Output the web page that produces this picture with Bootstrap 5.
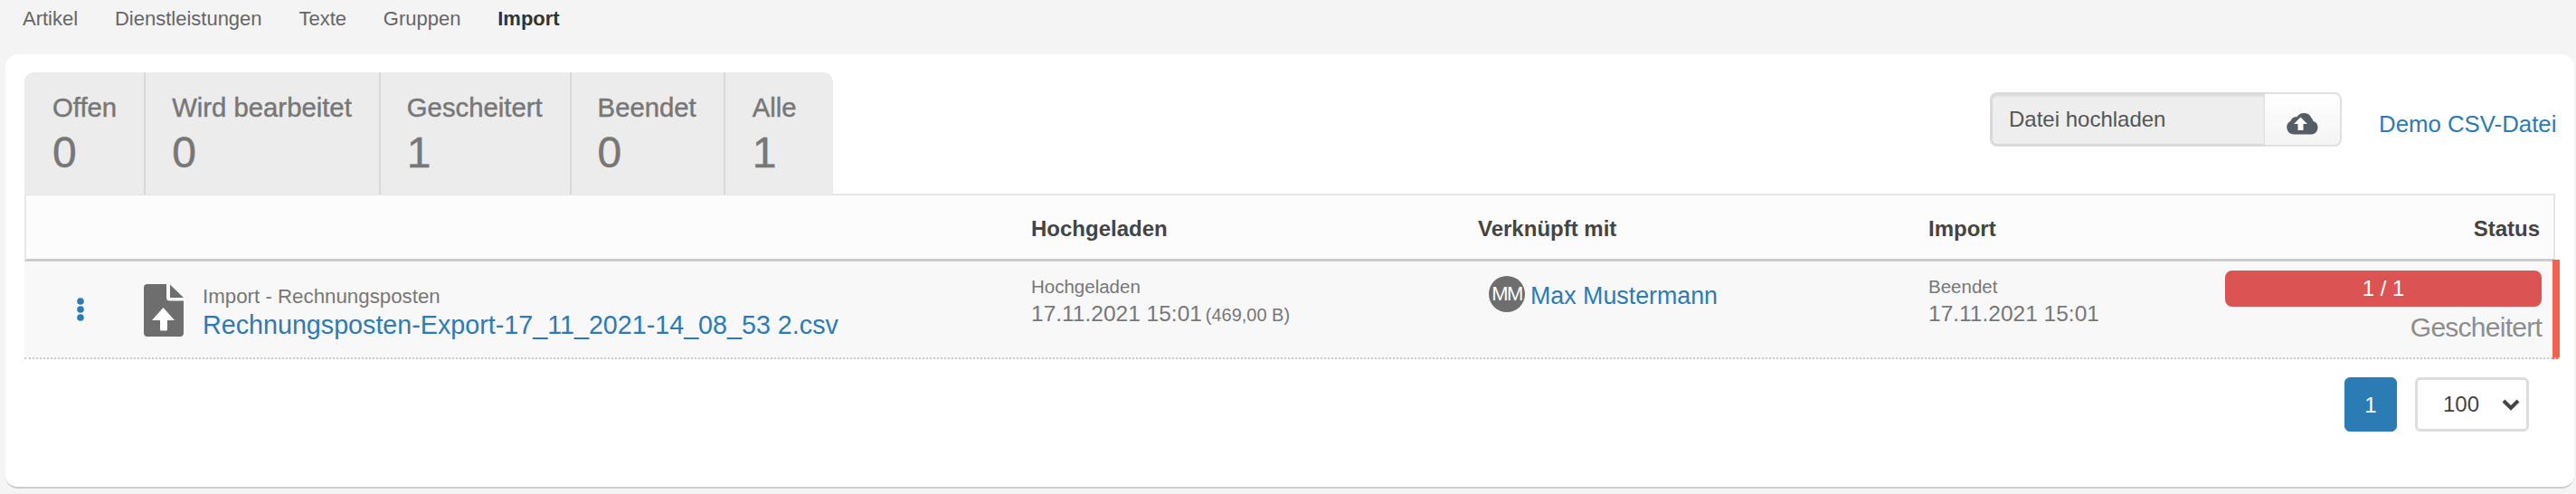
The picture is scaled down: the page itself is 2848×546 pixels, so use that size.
<!DOCTYPE html>
<html lang="de"><head><meta charset="utf-8"><title>Import</title>
<link rel="stylesheet" href="https://cdn.jsdelivr.net/npm/bootstrap@5.3.0/dist/css/bootstrap.min.css">
<style>
html,body{height:546px;overflow:hidden}
body{background:#f4f4f4;font-family:"Liberation Sans",Arial,sans-serif;font-size:24px;color:#777}
.topnav{height:60px;padding:4px 0 0 25px;gap:40.8px}
.topnav a{color:#666;font-size:22px;line-height:34px;text-decoration:none}
.topnav a.cur{color:#333;font-weight:700}
.sheet{margin:0 2px 0 6px;height:480px;background:#fff;border-radius:14px;border-bottom:2px solid #ccc;padding:20px 21px 0 21px}
.headbar{height:134px}
.stat-tabs{background:#ececec;border-radius:10px 10px 0 0;height:135px;width:894px}
.stat-tab{border-right:2px solid #d8d8d8;padding:23px 30px 0 29px;color:#777;text-decoration:none;-webkit-text-stroke:.45px #777}
.stat-tab:first-child{padding-left:31px}
.stat-tab:last-child{border-right:0;padding:23px 0 0 30px}
.stat-label{font-size:29.300px;line-height:32px}
.stat-num{font-size:48px;line-height:56px;margin-top:6px}
.upl{width:389px;height:60px;margin:22px 41px 0 0}
.upl .form-control{background:#eee;border:3px solid #d9d9d9;border-right-width:1px;color:#555;font-size:24px;border-radius:8px 0 0 8px;padding:0 18px;line-height:54px;box-shadow:inset 0 2px 2px rgba(0,0,0,.06)}
.upl .btn{width:86px;padding:8px 0 0;background:linear-gradient(#fff,#f4f4f4);border:2px solid #e0e0e0;border-left-width:1px;border-radius:0 8px 8px 0}
.demo{font-size:25.800px;line-height:30px;color:#2b7bb5;text-decoration:none;margin-top:42px;width:195px;white-space:nowrap}
.tabhead{height:75px;background:#fcfcfc;border:2px solid #e6e6e6;border-bottom:3px solid #ccc;font-weight:700;font-size:24px;color:#444;padding-top:19px}
.c1{width:1111px;flex:none}.c2{width:494px;flex:none}.c3{width:498px;flex:none}.c4{flex:1}
.tabhead .c4{padding-right:15px}
.datarow{height:108px;margin-right:-5px;padding-right:8px;background:#f8f8f8;position:relative}
.datarow::after{content:"";position:absolute;left:0;right:0;bottom:0;border-bottom:2px dotted #ccc}
.datarow::before{content:"";position:absolute;right:0;top:-2px;bottom:0;width:8px;background:#f5614f}
.datarow .c1{padding-left:56px;padding-top:25px;width:1113px}
.dots{width:76px;padding-top:8px}
.filebox{margin-left:21px;margin-top:1px}
.filesub{font-size:22.300px;line-height:26px;color:#777}
.sub{font-size:20.5px;line-height:26px;color:#777}
.fname{font-size:28.700px;line-height:36px;color:#2b7bb5;text-decoration:none;white-space:nowrap;display:block}
.when{font-size:24.500px;line-height:32px;color:#777;margin-top:1px}
.when small{font-size:20px;margin-left:-3px}
.datarow .c2,.stampcol{padding-top:15px}
.who{padding:16px 0 0 12px;gap:6px}
.ava{width:40px;height:40px;border-radius:50%;background:#6e6e6e;color:#fff;font-size:22px;letter-spacing:-1.500px;line-height:40px;text-align:center;flex:none}
.who a{font-size:26.800px;color:#2b7bb5;text-decoration:none;line-height:40px;padding-top:2px}
.state{padding:10px 12px 0 0;text-align:right}
.redbar{background:#dc5353;height:40px;border-radius:8px;color:#fff;font-size:24px;line-height:40px;margin-left:auto;width:350px;text-align:center}
.state-txt{font-size:30px;line-height:36px;color:#8d8d8d;margin-top:5px;letter-spacing:-.75px}
.pager{margin:20px 29px 0 0;gap:20px}
.pager .pagination{margin:0}
.pager .page-link{width:58px;height:60px;padding:0;line-height:60px;text-align:center;background:#2b7bb5;border-color:#2b7bb5;font-size:24px;border-radius:6px!important}
.pager .form-select{width:126px;height:60px;font-size:24px;color:#444;border:3px solid #ddd;border-radius:6px;padding:0 0 0 28px;box-shadow:none;background-position:right 7px center;background-size:20px 16px;background-image:url("data:image/svg+xml,%3csvg xmlns='http://www.w3.org/2000/svg' viewBox='0 0 20 16'%3e%3cpath fill='none' stroke='%23444' stroke-width='4' d='M2 4l8 8 8-8'/%3e%3c/svg%3e")}
</style></head>
<body>
<nav class="d-flex topnav">
<a href="#">Artikel</a><a href="#">Dienstleistungen</a><a href="#">Texte</a><a href="#">Gruppen</a><a href="#" class="cur">Import</a>
</nav>
<main class="sheet">
<div class="d-flex justify-content-between headbar">
  <div class="d-flex stat-tabs">
    <a href="#" class="stat-tab"><div class="stat-label">Offen</div><div class="stat-num">0</div></a>
    <a href="#" class="stat-tab"><div class="stat-label">Wird bearbeitet</div><div class="stat-num">0</div></a>
    <a href="#" class="stat-tab"><div class="stat-label">Gescheitert</div><div class="stat-num">1</div></a>
    <a href="#" class="stat-tab"><div class="stat-label">Beendet</div><div class="stat-num">0</div></a>
    <a href="#" class="stat-tab"><div class="stat-label">Alle</div><div class="stat-num">1</div></a>
  </div>
  <div class="d-flex">
    <div class="input-group flex-nowrap upl">
      <span class="form-control">Datei hochladen</span>
      <button class="btn" type="button" aria-label="Datei hochladen"><svg width="36" height="26" viewBox="0 0 36 26"><path fill="#555c63" d="M8 25.500A7.800 7.800 0 0 1 4.500 10.800 6.500 6.500 0 0 1 11.500 6.200 9 9 0 0 1 27.500 7.500 6 6 0 0 1 29.500 11 7.500 7.500 0 0 1 28 25.500z"/><path fill="#fff" d="M15.500 6.500l7.500 7.500h-4.500v7h-6v-7H8z"/></svg></button>
    </div>
    <a href="#" class="demo">Demo CSV-Datei</a>
  </div>
</div>
<div class="d-flex tabhead">
  <div class="c1"></div><div class="c2">Hochgeladen</div><div class="c3">Verknüpft mit</div><div class="c4 d-flex justify-content-between"><span>Import</span><span>Status</span></div>
</div>
<div class="d-flex datarow">
  <div class="c1 d-flex">
    <div class="dots"><svg width="12" height="26" viewBox="0 0 12 26"><g fill="#2b7bb5"><circle cx="6" cy="4" r="3.800"/><circle cx="6" cy="13" r="3.800"/><circle cx="6" cy="22" r="3.800"/></g></svg></div>
    <svg width="44" height="58" viewBox="0 0 44 58"><path fill="#6e6e6e" d="M4 0h21v15a3.500 3.500 0 0 0 3.500 3.500H44V54a4 4 0 0 1-4 4H4a4 4 0 0 1-4-4V4a4 4 0 0 1 4-4z"/><path fill="#6e6e6e" d="M29 .5L44 15H29z"/><path fill="#fff" d="M21.500 26L34 40h-8v10a1.500 1.500 0 0 1-1.500 1.500h-5A1.500 1.500 0 0 1 18 50V40H9z"/></svg>
    <div class="filebox"><div class="filesub">Import - Rechnungsposten</div><a href="#" class="fname">Rechnungsposten-Export-17_11_2021-14_08_53 2.csv</a></div>
  </div>
  <div class="c2"><div class="sub">Hochgeladen</div><div class="when">17.11.2021 15:01 <small>(469,00 B)</small></div></div>
  <div class="c3 d-flex who"><span class="ava">MM</span><a href="#">Max Mustermann</a></div>
  <div class="c4 d-flex">
    <div class="flex-grow-1 stampcol"><div class="sub">Beendet</div><div class="when">17.11.2021 15:01</div></div>
    <div class="state"><div class="redbar">1 / 1</div><div class="state-txt">Gescheitert</div></div>
  </div>
</div>
<div class="d-flex justify-content-end pager">
  <ul class="pagination"><li class="page-item active"><a class="page-link" href="#">1</a></li></ul>
  <select class="form-select" aria-label="Einträge"><option>100</option></select>
</div>
</main>
<script src="https://cdn.jsdelivr.net/npm/bootstrap@5.3.0/dist/js/bootstrap.bundle.min.js"></script>
</body></html>
